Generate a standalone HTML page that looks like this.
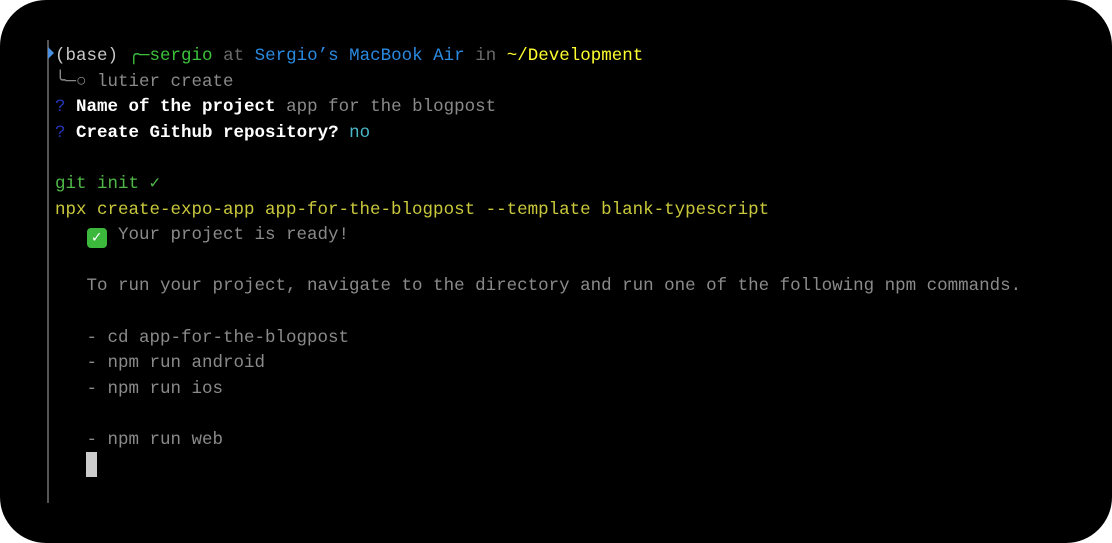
<!DOCTYPE html>
<html><head><meta charset="utf-8"><style>
html,body{margin:0;padding:0;background:#fff;}
.win{position:absolute;left:0;top:0;width:1112px;height:543px;background:#000;border-radius:46px;overflow:hidden;}
.bar{position:absolute;left:47px;top:40px;width:2px;height:463px;background:#555;}
.tri{position:absolute;left:48px;top:47px;width:0;height:0;border-top:6px solid transparent;border-bottom:6px solid transparent;border-left:6px solid #4a8fe0;}
pre{position:absolute;left:55px;top:44px;margin:0;font-family:"Liberation Mono","DejaVu Sans Mono",monospace;font-size:17.5px;line-height:25.6px;color:#c8c8c8;}
.g{color:#3cc23c}.dim{color:#6a6a6a}.b{color:#2a8ae0}.y{color:#ffff30}
.q{color:#2536b8}.w{color:#fff;font-weight:bold}.gr{color:#8a8a8a}.c{color:#4ab8c8}
.gi{color:#4fb848}.yl{color:#c9c83c}
.chk{display:inline-block;width:20px;height:20px;margin-right:1px;background:#3cb83c;border-radius:4px;color:#fff;font-size:16px;line-height:20px;text-align:center;vertical-align:-3px;font-weight:bold;}
.cur{position:absolute;left:86px;top:452px;width:11px;height:25px;background:#ccc;}
</style></head><body>
<div class="win">
<div class="bar"></div><div class="tri"></div>
<pre>(base) <span class="g">╭─sergio</span> <span class="dim">at</span> <span class="b">Sergio’s MacBook Air</span> <span class="dim">in</span> <span class="y">~/Development</span>
<span class="gr">╰─○ lutier create</span>
<span class="q">?</span> <span class="w">Name of the project</span> <span class="gr">app for the blogpost</span>
<span class="q">?</span> <span class="w">Create Github repository?</span> <span class="c">no</span>

<span class="gi">git init ✓</span>
<span class="yl">npx create-expo-app app-for-the-blogpost --template blank-typescript</span>
<span class="gr">   <span class="chk">✓</span> Your project is ready!</span>

<span class="gr">   To run your project, navigate to the directory and run one of the following npm commands.</span>

<span class="gr">   - cd app-for-the-blogpost</span>
<span class="gr">   - npm run android</span>
<span class="gr">   - npm run ios</span>

<span class="gr">   - npm run web</span>
</pre>
<div class="cur"></div>
</div>
</body></html>
